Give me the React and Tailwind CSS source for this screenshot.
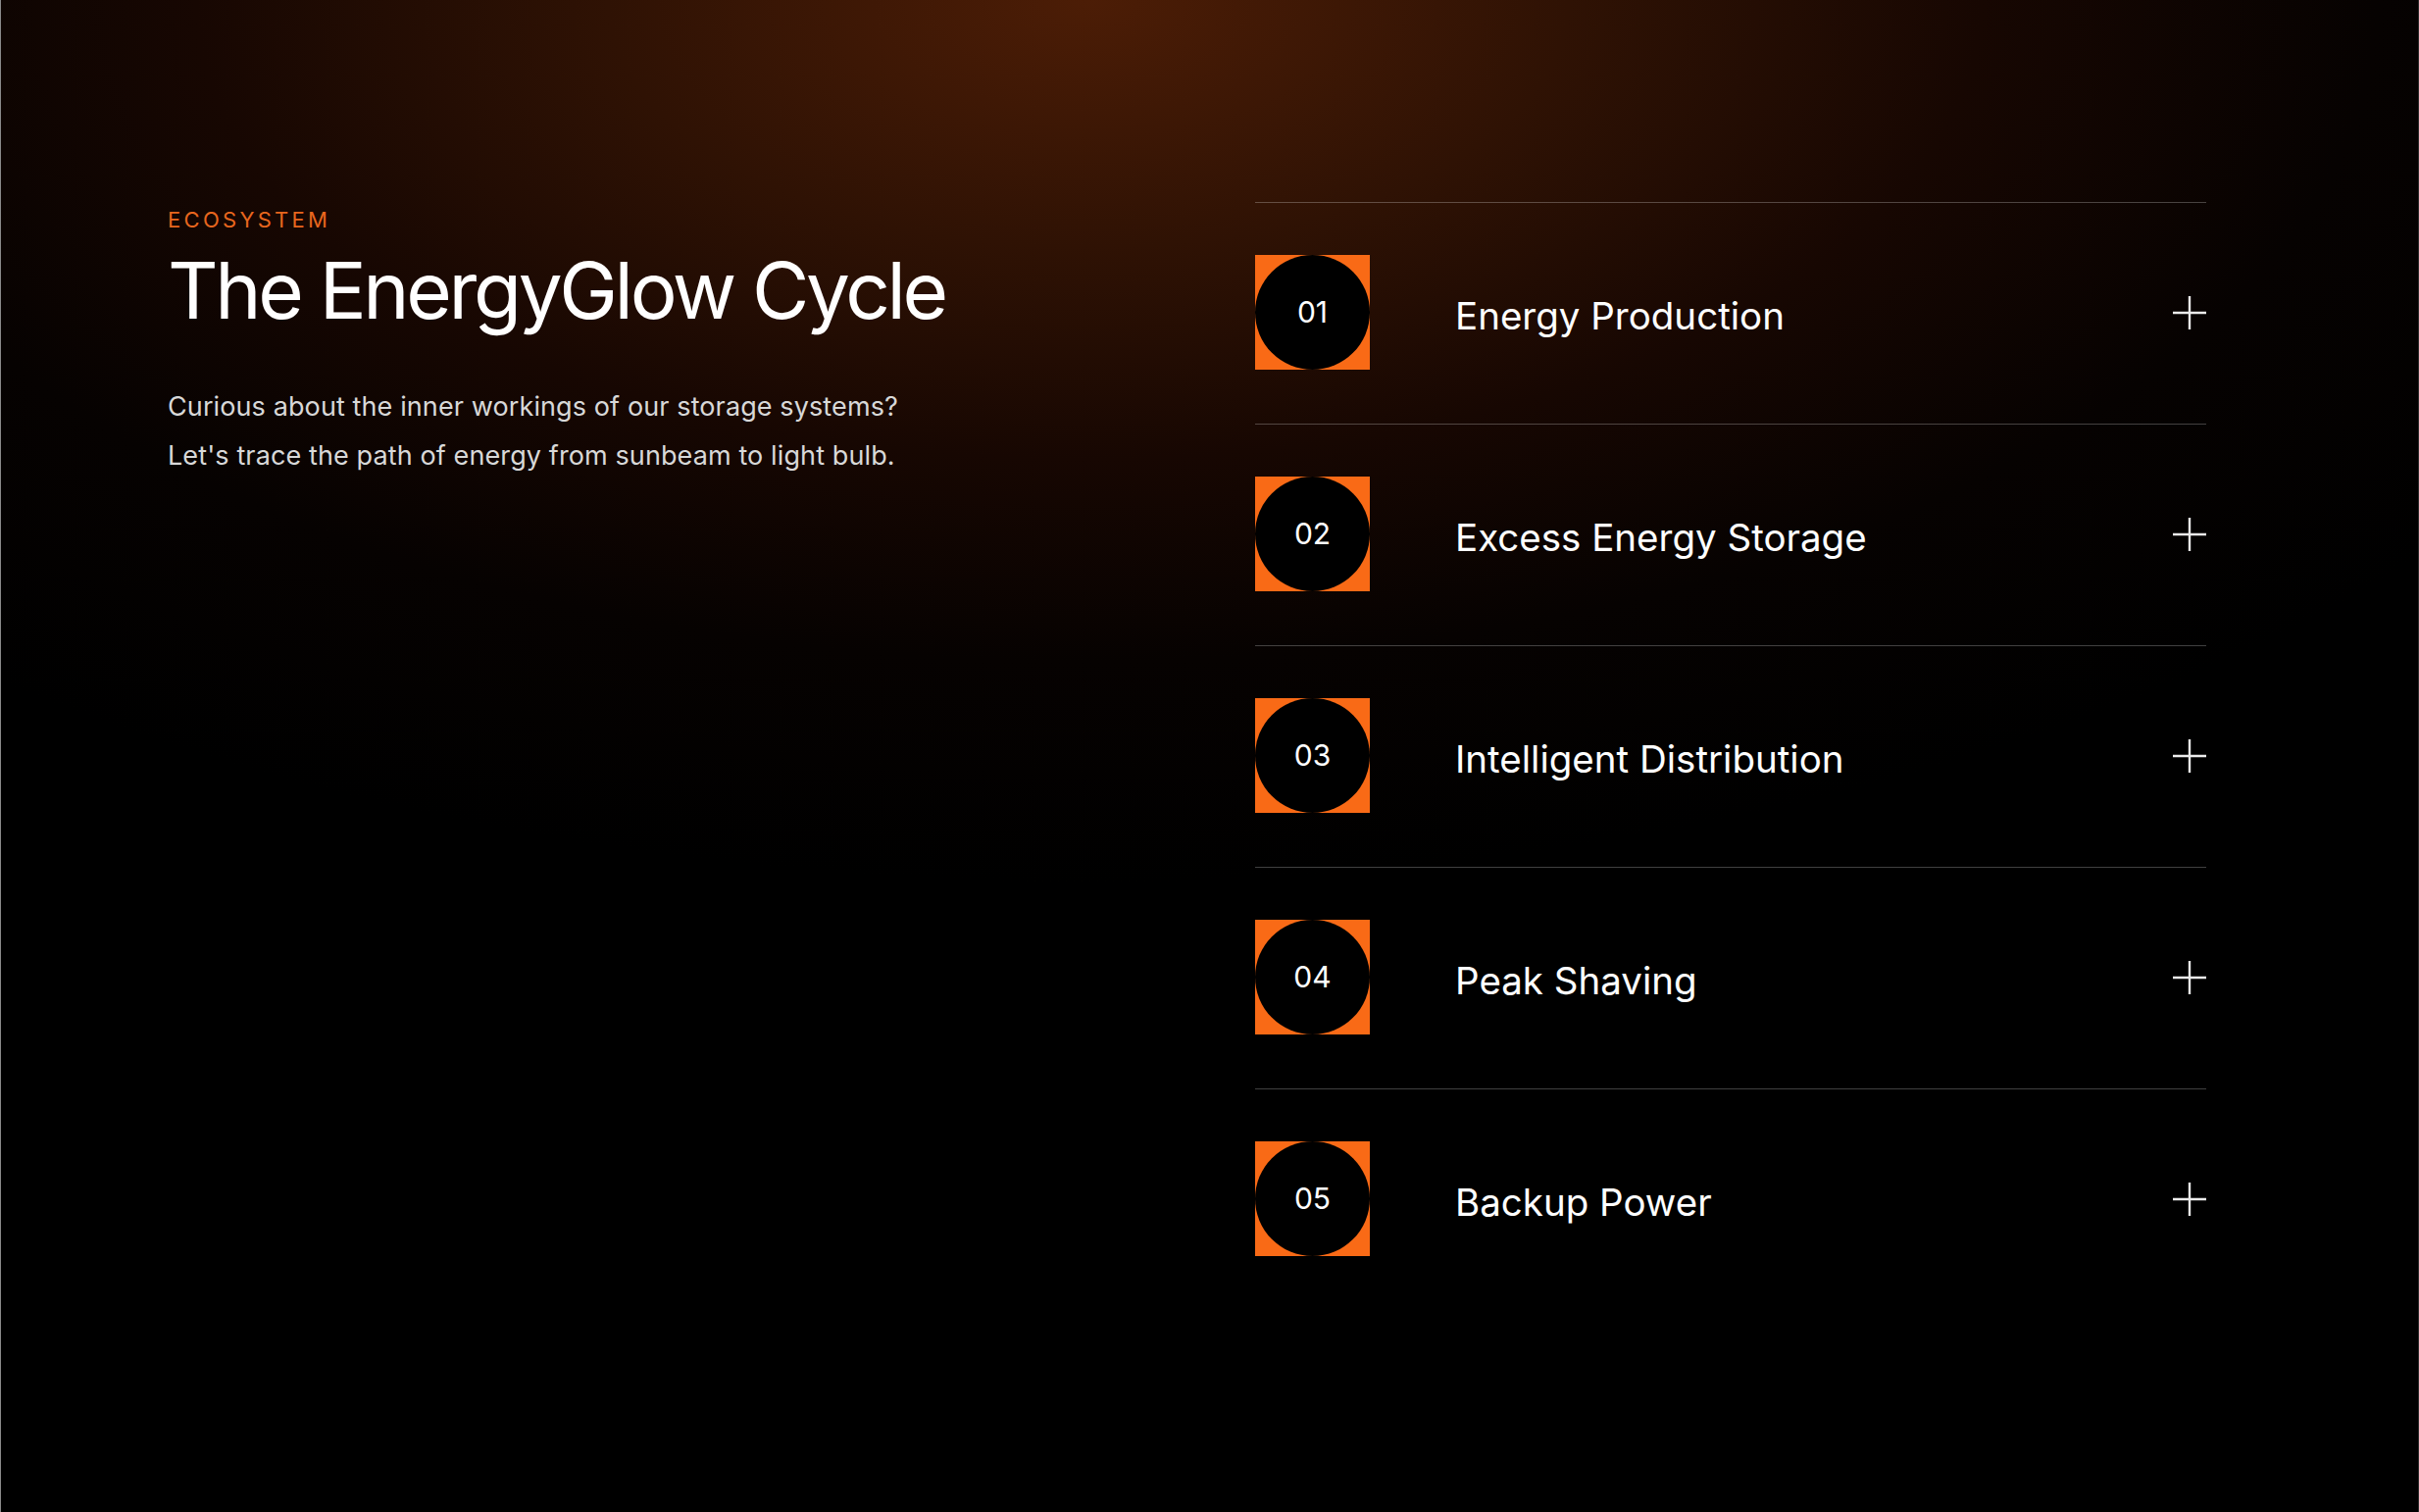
import React from "react";

const items = [
  ["01", "Energy Production"],
  ["02", "Excess Energy Storage"],
  ["03", "Intelligent Distribution"],
  ["04", "Peak Shaving"],
  ["05", "Backup Power"],
];

function PlusIcon() {
  return (
    <svg width="34" height="34" viewBox="0 0 34 34" fill="none" className="shrink-0">
      <line x1="17" y1="0" x2="17" y2="34" stroke="#ececec" strokeWidth="2.4" />
      <line x1="0" y1="17" x2="34" y2="17" stroke="#ececec" strokeWidth="2.4" />
    </svg>
  );
}

export default function App() {
  return (
    <div className="min-h-screen w-full bg-black bg-[radial-gradient(ellipse_1750px_900px_at_45%_0%,#4c1d06_0%,#2f1204_28%,#170702_52%,#060201_75%,#000_100%)] border-l border-r border-l-[#8a8a8a] border-r-[#2e2e2e] font-[Inter,sans-serif] text-white">
      <div className="flex items-start pl-[170px] pt-[206px] pb-[200px]">
        <div className="mt-[4px] flex flex-col">
          <div className="text-[22px] leading-[28px] tracking-[0.15em] text-[#e8661e]">ECOSYSTEM</div>
          <h1 className="mt-[14px] text-[80px] leading-[88px] tracking-[-0.042em] text-white font-normal">
            The EnergyGlow Cycle
          </h1>
          <p className="mt-[50px] text-[27px] leading-[50px] tracking-[0.004em] text-[#d8d8d8]">
            Curious about the inner workings of our storage systems?
            <br />
            Let's trace the path of energy from sunbeam to light bulb.
          </p>
        </div>
        <div className="ml-auto mr-[216px] w-[970px] flex flex-col">
          {items.map(([n, t]) => (
            <div key={n} className="flex items-center border-t border-white/25 pt-[53px] pb-[55px]">
              <div className="w-[117px] h-[117px] bg-[#f96a16] flex items-center justify-center shrink-0">
                <div className="w-[117px] h-[117px] rounded-full bg-black flex items-center justify-center text-[30px] text-white">
                  {n}
                </div>
              </div>
              <div className="ml-[87px] flex-1 pt-[6px] text-[38.5px] leading-[48px] text-white">{t}</div>
              <PlusIcon />
            </div>
          ))}
        </div>
      </div>
    </div>
  );
}
